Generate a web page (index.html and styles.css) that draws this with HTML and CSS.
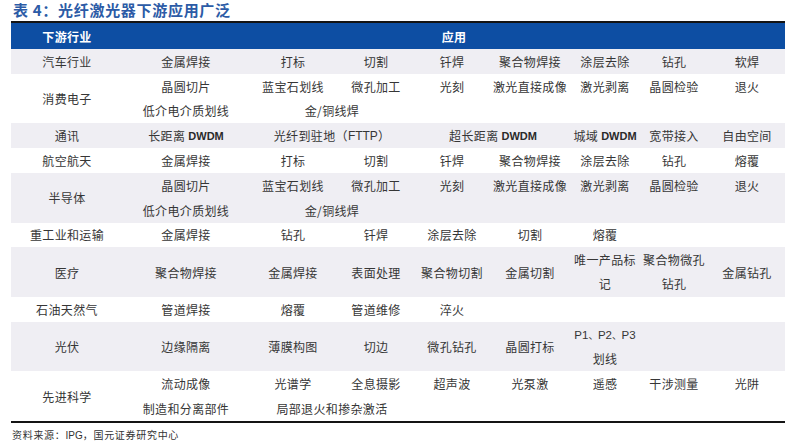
FILE: index.html
```html
<!DOCTYPE html>
<html lang="zh-CN">
<head>
<meta charset="utf-8">
<title>表 4：光纤激光器下游应用广泛</title>
<link rel="stylesheet" href="styles.css">
</head>
<body>
<div class="wrap">
  <h1 class="title">表 4：光纤激光器下游应用广泛</h1>
  <div class="tbl">
    <div class="row head">
      <div class="c lbl">下游行业</div>
      <div class="c all">应用</div>
    </div>

    <div class="row grey">
      <div class="c lbl">汽车行业</div>
      <div class="c">金属焊接</div><div class="c">打标</div><div class="c">切割</div><div class="c">钎焊</div>
      <div class="c">聚合物焊接</div><div class="c">涂层去除</div><div class="c">钻孔</div><div class="c">软焊</div>
    </div>

    <div class="row tall">
      <div class="c lbl span2r">消费电子</div>
      <div class="c">晶圆切片</div><div class="c">蓝宝石划线</div><div class="c">微孔加工</div><div class="c">光刻</div>
      <div class="c">激光直接成像</div><div class="c">激光剥离</div><div class="c">晶圆检验</div><div class="c">退火</div>
      <div class="c">低介电介质划线</div><div class="c span2c">金/铜线焊</div>
    </div>

    <div class="row grey">
      <div class="c lbl">通讯</div>
      <div class="c">长距离 <span class="lat">DWDM</span></div>
      <div class="c span2c">光纤到驻地（<span class="sans">FTTP</span>）</div>
      <div class="c span2c">超长距离 <span class="lat">DWDM</span></div>
      <div class="c">城域 <span class="lat">DWDM</span></div>
      <div class="c">宽带接入</div>
      <div class="c">自由空间</div>
    </div>

    <div class="row">
      <div class="c lbl">航空航天</div>
      <div class="c">金属焊接</div><div class="c">打标</div><div class="c">切割</div><div class="c">钎焊</div>
      <div class="c">聚合物焊接</div><div class="c">涂层去除</div><div class="c">钻孔</div><div class="c">熔覆</div>
    </div>

    <div class="row tall grey">
      <div class="c lbl span2r">半导体</div>
      <div class="c">晶圆切片</div><div class="c">蓝宝石划线</div><div class="c">微孔加工</div><div class="c">光刻</div>
      <div class="c">激光直接成像</div><div class="c">激光剥离</div><div class="c">晶圆检验</div><div class="c">退火</div>
      <div class="c">低介电介质划线</div><div class="c span2c">金/铜线焊</div>
    </div>

    <div class="row">
      <div class="c lbl">重工业和运输</div>
      <div class="c">金属焊接</div><div class="c">钻孔</div><div class="c">钎焊</div><div class="c">涂层去除</div>
      <div class="c">切割</div><div class="c">熔覆</div>
    </div>

    <div class="row tall grey">
      <div class="c lbl span2r">医疗</div>
      <div class="c span2r">聚合物焊接</div><div class="c span2r">金属焊接</div><div class="c span2r">表面处理</div>
      <div class="c span2r">聚合物切割</div><div class="c span2r">金属切割</div>
      <div class="c span2r"><span class="ml">唯一产品标<br>记</span></div>
      <div class="c span2r"><span class="ml">聚合物微孔<br>钻孔</span></div>
      <div class="c span2r">金属钻孔</div>
    </div>

    <div class="row">
      <div class="c lbl">石油天然气</div>
      <div class="c">管道焊接</div><div class="c">熔覆</div><div class="c">管道维修</div><div class="c">淬火</div>
    </div>

    <div class="row tall grey">
      <div class="c lbl span2r">光伏</div>
      <div class="c span2r">边缘隔离</div><div class="c span2r">薄膜构图</div><div class="c span2r">切边</div>
      <div class="c span2r">微孔钻孔</div><div class="c span2r">晶圆打标</div>
      <div class="c span2r"><span class="ml"><span class="pnum">P1<span class="dun">、</span>P2<span class="dun">、</span>P3</span><br>划线</span></div>
    </div>

    <div class="row tall">
      <div class="c lbl span2r">先进科学</div>
      <div class="c">流动成像</div><div class="c">光谱学</div><div class="c">全息摄影</div><div class="c">超声波</div>
      <div class="c">光泵激</div><div class="c">遥感</div><div class="c">干涉测量</div><div class="c">光阱</div>
      <div class="c">制造和分离部件</div><div class="c span2c">局部退火和掺杂激活</div>
    </div>
  </div>
  <p class="source">资料来源：<span class="sans">IPG</span>，国元证券研究中心</p>
</div>
</body>
</html>
```

FILE: styles.css
```css
html, body {
  margin: 0;
  padding: 0;
  background: #ffffff;
}

body {
  font-family: "Noto Sans CJK SC", "Noto Sans", sans-serif;
  color: #363636;
}

.wrap {
  width: 774px;
  margin-left: 11px;
}

.title {
  margin: 0 0 0 2px;
  height: 21px;
  line-height: 20px;
  font-size: 15px;
  font-weight: 700;
  letter-spacing: 0.7px;
  color: #2c5ba6;
}

.tbl {
  border-top: 2px solid #141414;
  border-bottom: 2px solid #141414;
}

.row {
  display: grid;
  grid-template-columns: 112px 126px 88px 78px 74px 82px 68px 70px 76px;
  grid-template-rows: 24.8px;
  background: #ffffff;
}

.row.tall {
  grid-template-rows: 24.8px 24.8px;
}

.row.grey {
  background: #efeef3;
}

.row.head {
  grid-template-rows: 26px;
  background: #0d4ea3;
  color: #ffffff;
  font-weight: 700;
}

.c {
  display: flex;
  align-items: center;
  justify-content: center;
  text-align: center;
  font-size: 12px;
  letter-spacing: 0.35px;
  white-space: nowrap;
}

.lbl {
  grid-column-start: 1;
}

.all {
  grid-column: 2 / 10;
}

.span2r {
  grid-row: span 2;
}

.span2c {
  grid-column-end: span 2;
}

.ml {
  display: block;
  line-height: 24px;
  text-align: center;
}

.lat {
  font-family: "Liberation Sans Narrow", "Liberation Sans", sans-serif;
  font-weight: 700;
  font-size: 11px;
  letter-spacing: 0;
  margin-left: 3px;
  color: #2a2a2a;
}

.sans {
  font-family: "Liberation Sans", "Noto Sans CJK SC", sans-serif;
  letter-spacing: 0;
}

.pnum {
  font-family: "Liberation Sans", "Noto Sans CJK SC", sans-serif;
  font-size: 11.5px;
  letter-spacing: 0;
}

.dun {
  font-family: "Noto Sans CJK SC", sans-serif;
  font-size: 9.5px;
}

.source {
  margin: 0;
  padding: 5px 0 0 1px;
  line-height: 14px;
  font-size: 10px;
  letter-spacing: 0.7px;
  color: #333333;
}
```
